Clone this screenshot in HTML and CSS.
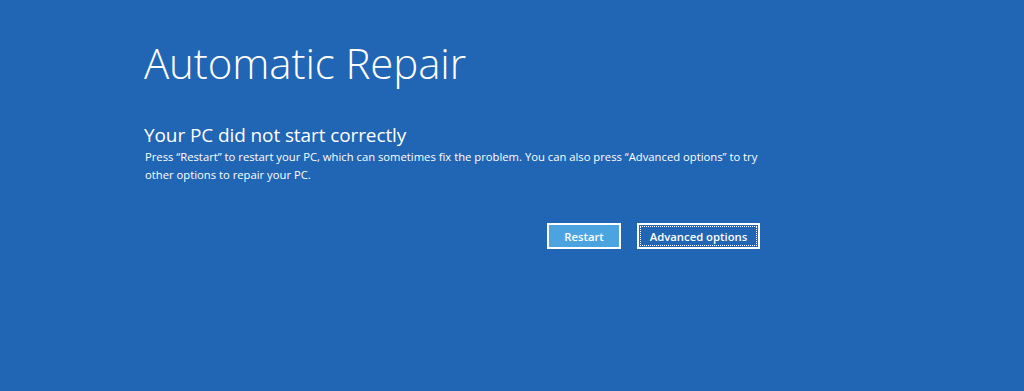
FILE: index.html
```html
<!DOCTYPE html>
<html lang="en">
<head>
    <meta charset="UTF-8">
    <meta name="viewport" content="width=device-width, initial-scale=1.0">
    <title>Automatic Repair</title>
    <link rel="stylesheet" href="styles.css">
</head>
<body>
    <div class="repair-screen">
        <h1 class="repair-title">Automatic Repair</h1>

        <div class="repair-body">
            <h2 class="repair-heading">Your PC did not start correctly</h2>
            <p class="repair-text">Press “Restart” to restart your PC, which can sometimes fix the problem. You can also press “Advanced options” to try other options to repair your PC.</p>
        </div>

        <!-- Actions -->
        <div class="repair-actions">
            <button class="repair-button primary">Restart</button>
            <button class="repair-button focused">Advanced options</button>
        </div>
    </div>
</body>
</html>
```

FILE: styles.css
```css
/* Recovery screen */
html, body {
    margin: 0;
    height: 100%;
    background: #2165b5;
}

body {
    font-family: "Open Sans", "Noto Sans", sans-serif;
    color: white;
}

.repair-screen {
    width: 615px;
    padding: 33px 0 0 145px;
}

.repair-title {
    font-size: 42px;
    font-weight: 300;
    line-height: 60px;
    margin: 0 0 0 -1px;
    letter-spacing: -0.1px;
}

.repair-body {
    margin-top: 29px;
}

.repair-heading {
    font-size: 19px;
    font-weight: 400;
    line-height: 26px;
    margin: 0 0 0 -1px;
    letter-spacing: -0.1px;
}

.repair-text {
    font-size: 11.25px;
    line-height: 18px;
    margin: 0;
    max-width: 625px;
}

/* Buttons */
.repair-actions {
    display: flex;
    justify-content: flex-end;
    gap: 16px;
    margin-top: 39px;
}

.repair-button {
    font-family: inherit;
    font-size: 11.3px;
    font-weight: 600;
    color: white;
    height: 26px;
    padding: 0 8px;
    border: 2px solid white;
    background: #2165b5;
    position: relative;
}

.repair-button.primary {
    width: 74px;
    background: #4ba4e0;
}

.repair-button.focused {
    width: 123px;
}

.repair-button.focused::after {
    content: "";
    position: absolute;
    inset: 1px;
    border: 1px dotted white;
}
```
